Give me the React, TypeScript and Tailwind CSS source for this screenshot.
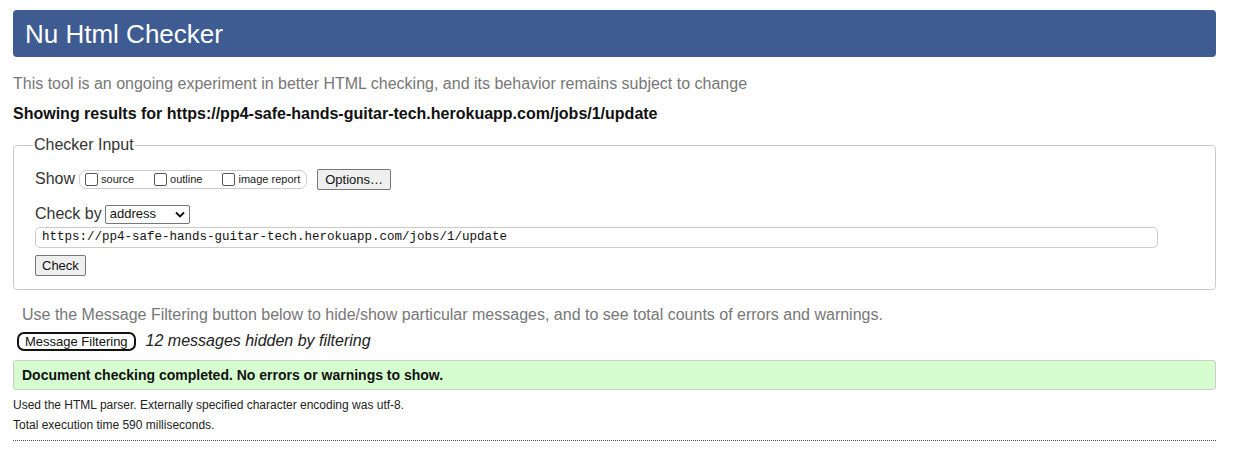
import React from "react";

const url = "https://pp4-safe-hands-guitar-tech.herokuapp.com/jobs/1/update";

function Checkbox({ label }: { label: string }) {
  return (
    <label className="flex items-center gap-[3px] text-[11px] text-[#222]">
      <span className="inline-block w-[13px] h-[13px] border border-[#555] rounded-[2px] bg-white" />
      {label}
    </label>
  );
}

export default function App() {
  return (
    <div className="bg-white min-h-[457px] px-[13px] pt-[10px] font-['Liberation_Sans',Arial,sans-serif] text-[#222] w-[1229px]">
      <h1 className="bg-[#3e5c92] text-white rounded-[4px] h-[47px] flex items-center pl-[12px] text-[26px] leading-none">
        Nu Html Checker
      </h1>

      <p className="text-[#777] text-[16px] mt-[18px] leading-[18px]">
        This tool is an ongoing experiment in better HTML checking, and its behavior remains subject to change
      </p>
      <p className="font-bold text-[16px] text-[#111] mt-[12px] leading-[18px]">Showing results for {url}</p>

      <fieldset className="mt-[13px] border border-[#ccc] rounded-[4px] pl-[21px] pr-[57px] h-[154px]">
        <legend className="ml-[-2px] px-[1px] text-[16px] text-[#333] leading-[18px]">Checker Input</legend>

        <div className="flex items-center mt-[13px]">
          <span className="text-[16px] text-[#333] mr-[4px]">Show</span>
          <div className="flex items-center border border-[#ccc] rounded-[7px] h-[19px] pl-[5px] pr-[6px] gap-[20px] mr-[10px]">
            <Checkbox label="source" />
            <Checkbox label="outline" />
            <Checkbox label="image report" />
          </div>
          <button className="h-[21px] px-[7px] text-[13px] text-[#111] bg-[#efefef] border border-[#767676] rounded-[2px]">
            Options…
          </button>
        </div>

        <div className="flex items-center mt-[11px]">
          <span className="text-[16px] text-[#333] mr-[3px]">Check by</span>
          <div className="h-[19px] w-[85px] border border-[#767676] rounded-[2px] flex items-center justify-between px-[4px] text-[13px] text-[#111]">
            address
            <svg width="10" height="7" viewBox="0 0 10 7">
              <path d="M1 1.5 L5 5.5 L9 1.5" fill="none" stroke="#111" strokeWidth="1.8" />
            </svg>
          </div>
        </div>

        <div className="mt-[1px] h-[21px] border border-[#ccc] rounded-[5px] flex items-center px-[6px] font-['Liberation_Mono','DejaVu_Sans_Mono',monospace] text-[12.5px] text-[#111]">
          {url}
        </div>

        <button className="mt-[7px] h-[21px] px-[6px] text-[13px] text-[#111] bg-[#efefef] border border-[#767676] rounded-[2px]">
          Check
        </button>
      </fieldset>

      <p className="text-[#777] text-[16px] mt-[16px] ml-[9px] leading-[18px]">
        Use the Message Filtering button below to hide/show particular messages, and to see total counts of errors and warnings.
      </p>

      <div className="flex items-center mt-[5px] ml-[4px]">
        <button className="h-[19px] px-[6px] text-[13px] text-[#111] border-2 border-[#111] rounded-[7px] leading-none">
          Message Filtering
        </button>
        <span className="italic text-[16px] text-[#222] ml-[10px]">12 messages hidden by filtering</span>
      </div>

      <div className="mt-[7px] h-[30px] bg-[#d6fdd0] border border-[#ccc] rounded-[3px] flex items-center pl-[8px] font-bold text-[14px] text-[#111]">
        Document checking completed. No errors or warnings to show.
      </div>

      <p className="text-[12px] text-[#222] mt-[7px] leading-[16px]">
        Used the HTML parser. Externally specified character encoding was utf-8.
      </p>
      <p className="text-[12px] text-[#222] mt-[4px] leading-[16px]">Total execution time 590 milliseconds.</p>
      <div className="mt-[7px] border-t border-dotted border-[#555]" />
    </div>
  );
}
